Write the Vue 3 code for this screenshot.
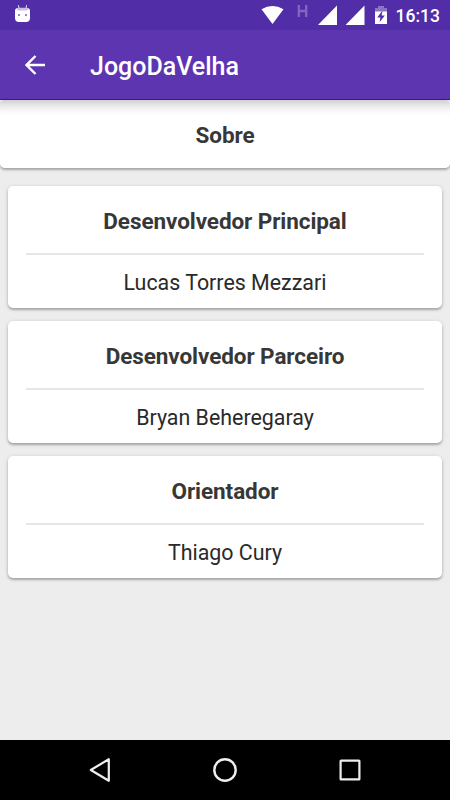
<script setup>
const people = [
  { role: 'Desenvolvedor Principal', name: 'Lucas Torres Mezzari' },
  { role: 'Desenvolvedor Parceiro', name: 'Bryan Beheregaray' },
  { role: 'Orientador', name: 'Thiago Cury' },
]
</script>

<template>
  <div class="screen">
    <div class="status">
      <svg class="droid" width="16" height="20" viewBox="0 0 16 20">
        <path d="M5 6L4.400 2.200M12 6l.6-3.800" stroke="#d3caea" stroke-width="1.100" fill="none" />
        <path d="M1 8q0-3 3-3h9q3 0 3 3v7q0 4-4 4H5q-4 0-4-4z" fill="#fff" />
        <path d="M2.500 6Q3 4.800 4.500 4.800h8q1.500 0 2 1.200L13 7.500H4z" fill="#c9bde5" />
        <path d="M4 11h2v2H4zM11 11h2v2h-2z" fill="#9a84cc" />
      </svg>
      <div class="indicators">
        <svg width="130" height="30" viewBox="0 0 130 30">
          <path d="M1.500 9.200Q12.500 2.800 23.500 9.200L12.500 24z" fill="#fff" />
          <path d="M38.800 5v12M46.200 5v12M38.800 11h7.400" stroke="#8068be" stroke-width="2.300" fill="none" />
          <path d="M58 25L77 5.500V25zM85.500 25L104.500 5.500V25z" fill="#fff" />
          <path d="M115 12V8h3V6h6v2h3v4z" fill="#8b74c4" />
          <path d="M115 11.500h12V24h-12z" fill="#fff" />
          <path d="M122.500 10.500L117.200 17.400h3.200l-.8 4.800 5.200-6.800h-3.200z" fill="#512da8" />
        </svg>
        <span class="clock">16:13</span>
      </div>
    </div>
    <header class="toolbar">
      <svg width="20" height="20" viewBox="0 0 20 20">
        <path d="M20 10H2M10.500 1L1.500 10l9 9" fill="none" stroke="#fff" stroke-width="2.400" />
      </svg>
      <h1>JogoDaVelha</h1>
    </header>
    <main>
      <section class="heading">Sobre</section>
      <div class="cards">
        <section v-for="person in people" :key="person.role" class="card">
          <h2>{{ person.role }}</h2>
          <p>{{ person.name }}</p>
        </section>
      </div>
    </main>
    <nav>
      <svg width="24" height="26" viewBox="0 0 24 26">
        <path d="M20.800 2.200v21.600L2.800 13z" fill="none" stroke="#eee" stroke-width="2.200" stroke-linejoin="round" />
      </svg>
      <svg width="26" height="26" viewBox="0 0 26 26">
        <circle cx="13" cy="13" r="10.700" fill="none" stroke="#eee" stroke-width="2.400" />
      </svg>
      <svg width="24" height="26" viewBox="0 0 24 26">
        <rect x="2.600" y="3.600" width="18.800" height="18.800" rx=".5" fill="none" stroke="#eee" stroke-width="2.200" />
      </svg>
    </nav>
  </div>
</template>

<style>
body { margin: 0; }
</style>

<style scoped>
.screen {
  width: 450px;
  height: 800px;
  display: flex;
  flex-direction: column;
  background: #ededed;
  font-family: Roboto, sans-serif;
  overflow: hidden;
}
.status {
  height: 30px;
  flex: none;
  background: #512da8;
  display: flex;
  justify-content: space-between;
  padding: 0 10px 0 14px;
}
.droid { margin-top: 3px; }
.indicators { display: flex; width: 180px; }
.indicators svg { flex: none; }
.clock {
  color: #fff;
  font-size: 17.5px;
  font-weight: 500;
  line-height: 32px;
  margin-left: 5.5px;
}
.toolbar {
  height: 70px;
  box-sizing: border-box;
  flex: none;
  background: #5e35b1;
  border-bottom: 1px solid #4b0ca0;
  display: flex;
  align-items: center;
  gap: 45px;
  padding-left: 25px;
}
h1 {
  margin: 4px 0 0;
  font-size: 25px;
  line-height: 30px;
  font-weight: 500;
  color: #fff;
}
main { flex: 1; }
.heading {
  height: 68px;
  box-sizing: border-box;
  border-radius: 5px;
  background: linear-gradient(#d0d0d0, #eaeaea 6px, #fafafa 12px, #fff 16px);
  box-shadow: 0 2px 2px rgba(0, 0, 0, .22), 0 1px 4px rgba(0, 0, 0, .15);
  text-align: center;
  font-size: 22.5px;
  line-height: 70px;
  font-weight: 700;
  letter-spacing: -.08px;
  color: #373737;
}
.cards {
  display: flex;
  flex-direction: column;
  gap: 13px;
  padding: 18px 8px 0;
}
.card {
  height: 122px;
  box-sizing: border-box;
  padding: 0 18px;
  border-radius: 5px;
  background: #fff;
  box-shadow: 0 2px 2px rgba(0, 0, 0, .2), 0 1px 4px rgba(0, 0, 0, .18);
  text-align: center;
}
h2 {
  margin: 0;
  height: 69px;
  box-sizing: border-box;
  border-bottom: 2px solid #e6e6e6;
  font-size: 22.5px;
  line-height: 70px;
  font-weight: 700;
  letter-spacing: -.08px;
  color: #373737;
}
p {
  margin: 0;
  font-size: 21.4px;
  line-height: 56px;
  color: #2a2a2a;
}
nav {
  height: 60px;
  flex: none;
  background: #000;
  display: flex;
  align-items: center;
  justify-content: space-between;
  padding: 0 88px;
}
</style>
